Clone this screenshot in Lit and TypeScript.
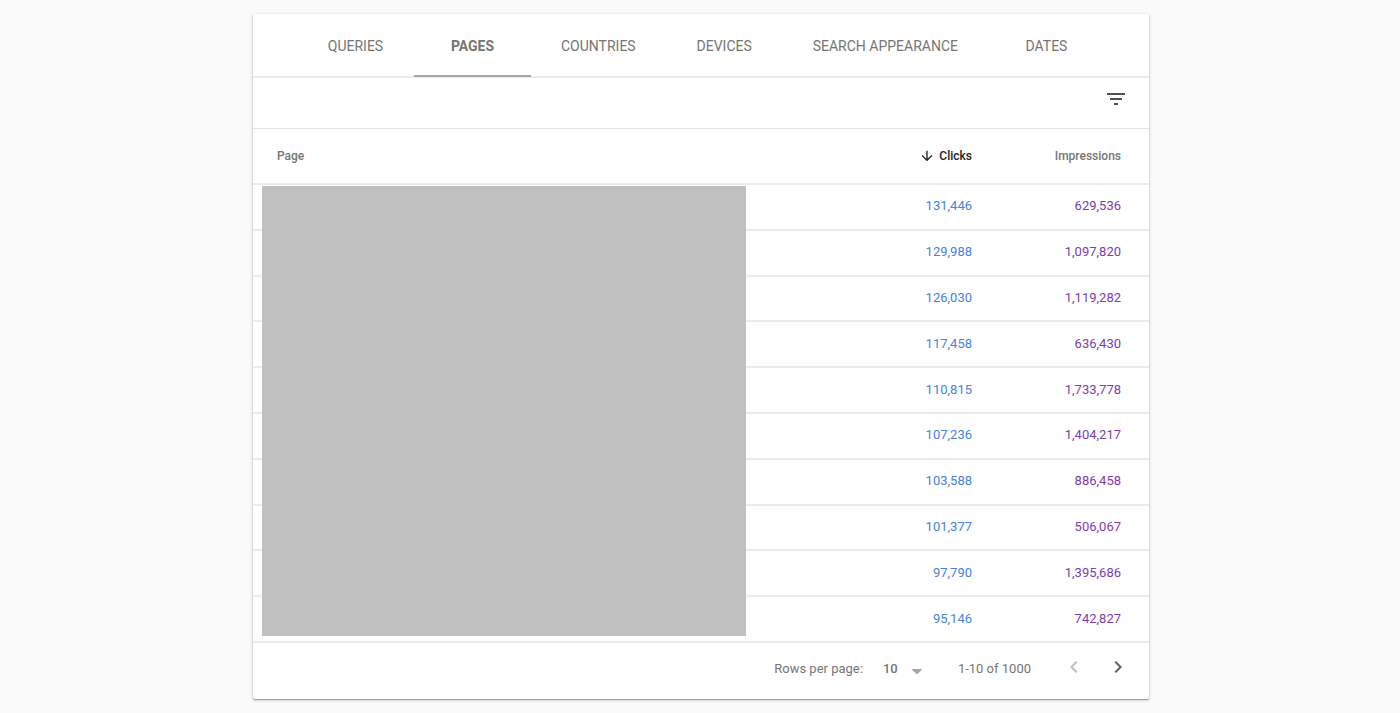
import {LitElement, html, css, svg} from 'lit';
import {customElement, property, state} from 'lit/decorators.js';
import {classMap} from 'lit/directives/class-map.js';

const TABS = ['Queries', 'Pages', 'Countries', 'Devices', 'Search appearance', 'Dates'];

const ROWS = [
    {clicks: 131446, impressions: 629536},
    {clicks: 129988, impressions: 1097820},
    {clicks: 126030, impressions: 1119282},
    {clicks: 117458, impressions: 636430},
    {clicks: 110815, impressions: 1733778},
    {clicks: 107236, impressions: 1404217},
    {clicks: 103588, impressions: 886458},
    {clicks: 101377, impressions: 506067},
    {clicks: 97790, impressions: 1395686},
    {clicks: 95146, impressions: 742827},
];

const ICONS = {
    filter: svg`<path d="M10 18h4v-2h-4v2zM3 6v2h18V6H3zm3 7h12v-2H6v2z"/>`,
    arrow: svg`<path d="M20 12l-1.41-1.41L13 16.17V4h-2v12.17l-5.58-5.59L4 12l8 8 8-8z"/>`,
    drop: svg`<path d="M6.5 12l5.5 5.5 5.5-5.5z"/>`,
    prev: svg`<path d="M15.41 7.41L14 6l-6 6 6 6 1.41-1.41L10.83 12z"/>`,
    next: svg`<path d="M10 6L8.59 7.41 13.17 12l-4.58 4.59L10 18l6-6z"/>`,
};

@customElement('md-icon')
export class MdIcon extends LitElement {
    static styles = css`
        :host {
            display: inline-flex;
            width: 24px;
            height: 24px;
        }

        svg {
            width: 100%;
            height: 100%;
            fill: currentcolor;
        }
    `;

    @property() name: keyof typeof ICONS = 'filter';

    render() {
        return html`<svg viewBox="0 0 24 24" aria-hidden="true">${ICONS[this.name]}</svg>`;
    }
}

@customElement('app-root')
export class AppRoot extends LitElement {
    static styles = css`
        :host {
            display: block;
            box-sizing: border-box;
            min-height: 100vh;
            padding: 14px 0 14px 2px;
            background: #fafafa;
            color: #757575;
            font-family: Roboto, "Liberation Sans", sans-serif;
            font-size: 13px;
            line-height: 16px;
        }

        button,
        select {
            margin: 0;
            padding: 0;
            border: 0;
            background: none;
            color: inherit;
            font: inherit;
            cursor: pointer;
        }

        .card {
            max-width: 896px;
            margin: 0 auto;
            border-radius: 2px;
            background: #fff;
            box-shadow: 0 1px 3px rgba(0, 0, 0, 0.3), 0 1px 1px rgba(0, 0, 0, 0.2);
        }

        .tabs {
            display: flex;
            justify-content: center;
            border-bottom: 2px solid #ebebeb;
        }

        /* the active underline overlaps the strip's own border */
        .tab {
            min-width: 117px;
            height: 63px;
            margin-bottom: -1px;
            padding: 3px 30px 0;
            border-bottom: 2px solid transparent;
            font-size: 14px;
            text-transform: uppercase;
        }

        .tab.active {
            border-bottom-color: #a6a6a6;
            font-weight: 700;
        }

        .toolbar {
            display: flex;
            justify-content: flex-end;
            padding: 9px 21px 17px;
            border-bottom: 1px solid #e4e4e4;
            color: #505050;
        }

        .toolbar button {
            display: flex;
        }

        .data {
            position: relative;
        }

        table {
            width: 100%;
            table-layout: fixed;
            border-collapse: separate;
            border-spacing: 0;
        }

        tbody {
            height: 458px;
        }

        th,
        td {
            padding: 0 28px 0 24px;
            border-bottom: 2px solid #ebebeb;
            text-align: right;
        }

        td {
            padding-bottom: 1px;
        }

        th {
            height: 54px;
            font-size: 12px;
            font-weight: 500;
        }

        th:first-child {
            text-align: left;
        }

        .metric {
            width: 149px;
            box-sizing: border-box;
        }

        th.metric {
            height: 56px;
        }

        .sorted {
            color: #212121;
        }

        .sorted button {
            display: inline-flex;
            align-items: center;
            gap: 4px;
            vertical-align: middle;
        }

        .sorted md-icon {
            width: 16px;
            height: 16px;
        }

        .clicks {
            color: #4683d9;
        }

        .impressions {
            color: #7d3cab;
        }

        .mask {
            position: absolute;
            top: 57px;
            bottom: 7px;
            left: 9px;
            width: 54%;
            background: #c0c0c0;
        }

        .pager {
            display: flex;
            box-sizing: border-box;
            align-items: center;
            justify-content: flex-end;
            height: 56px;
            padding: 0 19px 4px 0;
        }

        .size {
            display: flex;
            align-items: center;
            margin: 0 29px 0 20px;
        }

        select {
            appearance: none;
            width: 22px;
            font-weight: 500;
        }

        .size md-icon {
            color: #a6a6a6;
        }

        .pages {
            display: flex;
            gap: 20px;
            margin-left: 31px;
            padding-bottom: 4px;
        }

        .pages button {
            display: flex;
            color: #616161;
        }

        .pages button:disabled {
            color: #bdbdbd;
            cursor: default;
        }
    `;

    @state() private tab = 'Pages';

    private renderTab(name: string) {
        const active = name === this.tab;
        return html`
            <button
                role="tab"
                class=${classMap({tab: true, active})}
                aria-selected=${active ? 'true' : 'false'}
                @click=${() => (this.tab = name)}
            >${name}</button>
        `;
    }

    render() {
        return html`
            <main class="card">
                <div class="tabs" role="tablist">${TABS.map((name) => this.renderTab(name))}</div>
                <div class="toolbar">
                    <button aria-label="Filter rows"><md-icon name="filter"></md-icon></button>
                </div>
                <div class="data">
                    <table>
                        <thead>
                            <tr>
                                <th scope="col">Page</th>
                                <th scope="col" class="metric sorted" aria-sort="descending">
                                    <button><md-icon name="arrow"></md-icon>Clicks</button>
                                </th>
                                <th scope="col" class="metric">Impressions</th>
                            </tr>
                        </thead>
                        <tbody>
                            ${ROWS.map((row) => html`
                                <tr>
                                    <td></td>
                                    <td class="clicks">${row.clicks.toLocaleString('en-US')}</td>
                                    <td class="impressions">${row.impressions.toLocaleString('en-US')}</td>
                                </tr>
                            `)}
                        </tbody>
                    </table>
                    <div class="mask"></div>
                </div>
                <div class="pager">
                    <label for="size">Rows per page:</label>
                    <div class="size">
                        <select id="size">
                            <option>10</option>
                            <option>25</option>
                            <option>50</option>
                        </select>
                        <md-icon name="drop"></md-icon>
                    </div>
                    <span>1-10 of 1000</span>
                    <div class="pages">
                        <button aria-label="Previous page" disabled><md-icon name="prev"></md-icon></button>
                        <button aria-label="Next page"><md-icon name="next"></md-icon></button>
                    </div>
                </div>
            </main>
        `;
    }
}
